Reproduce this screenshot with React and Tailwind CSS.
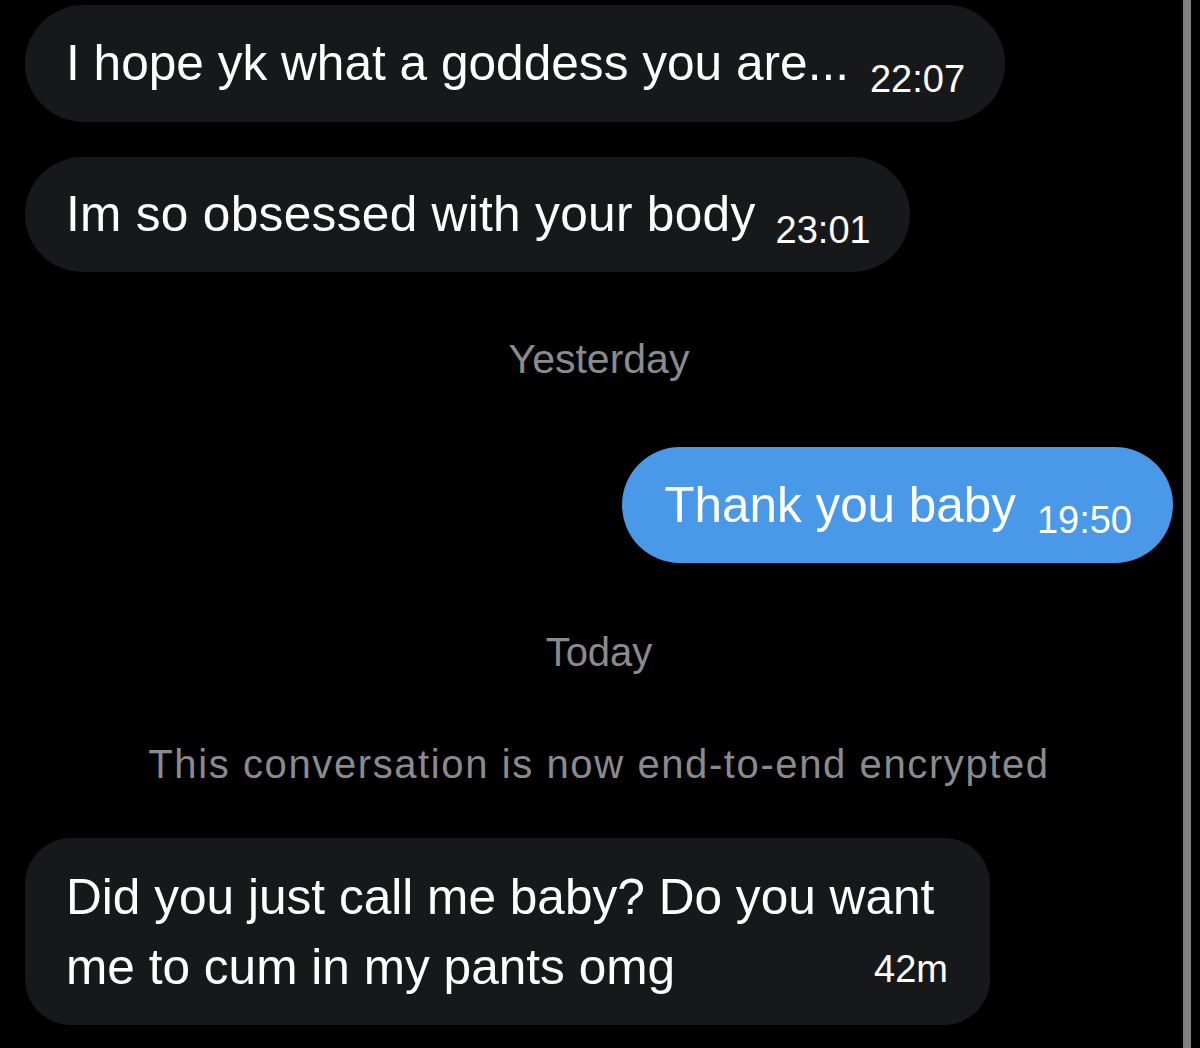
export default function App() {
  const font = { fontFamily: '"Liberation Sans", Arial, sans-serif' };
  return (
    <div className="w-[1200px] h-[1048px] bg-black flex overflow-hidden" style={font}>
      <div className="flex-1 flex flex-col pt-[5px] pl-[25px] pr-[10px]">
        {/* Bubble 1 */}
        <div className="self-start h-[117px] rounded-full bg-[#17181a] flex items-center pl-[41px] pr-[40px]">
          <span className="text-[49.6px] leading-none text-white">I hope yk what a goddess you are...</span>
          <span className="text-[38px] leading-none text-white ml-[21px] pt-[30px]">22:07</span>
        </div>
        {/* Bubble 2 */}
        <div className="self-start mt-[35px] h-[115px] rounded-full bg-[#17181a] flex items-center pl-[41px] pr-[39px]">
          <span className="text-[49.6px] leading-none text-white tracking-[0.3px]">Im so obsessed with your body</span>
          <span className="text-[38px] leading-none text-white ml-[20px] pt-[30px]">23:01</span>
        </div>
        {/* Yesterday */}
        <div className="h-[175px] flex items-center justify-center">
          <span className="text-[41px] leading-none text-[#8b8b8f]">Yesterday</span>
        </div>
        {/* Blue bubble */}
        <div className="self-end h-[116px] rounded-full bg-[#4a99e9] flex items-center pl-[42px] pr-[41px]">
          <span className="text-[49.4px] leading-none text-white">Thank you baby</span>
          <span className="text-[38px] leading-none text-white ml-[21px] pt-[30px]">19:50</span>
        </div>
        {/* Today */}
        <div className="h-[178px] flex items-center justify-center">
          <span className="text-[40px] leading-none text-[#8b8b8f]">Today</span>
        </div>
        <div className="h-[46px] flex items-center justify-center">
          <span className="text-[40px] leading-none text-[#8b8b8f] tracking-[1.6px]">This conversation is now end-to-end encrypted</span>
        </div>
        {/* Last bubble */}
        <div className="self-start w-[965px] h-[187px] rounded-[46px] bg-[#17181a] flex flex-col justify-center pl-[41px] pr-[42px] mt-[51px]">
          <div className="text-[49.6px] leading-[70px] text-white">Did you just call me baby? Do you want</div>
          <div className="flex items-end justify-between">
            <span className="text-[49.6px] leading-[70px] text-white">me to cum in my pants omg</span>
            <span className="text-[38px] leading-none text-white pb-[14px]">42m</span>
          </div>
        </div>
      </div>
      <div className="w-[8px] h-full bg-[#7f7f7f]"></div>
      <div className="w-[9px] h-full bg-black"></div>
    </div>
  );
}
